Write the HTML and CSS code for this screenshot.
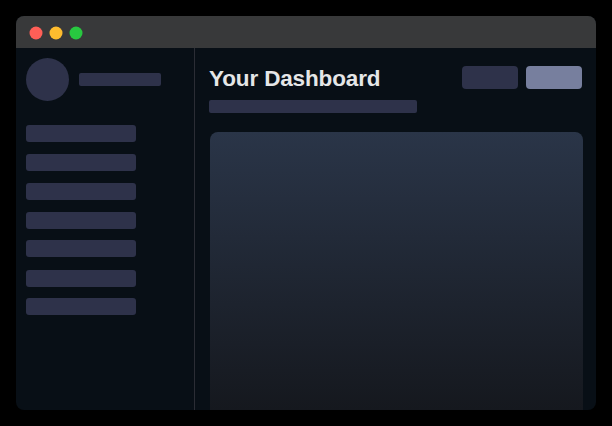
FILE: index.html
```html
<!DOCTYPE html>
<html lang="en">
<head>
<meta charset="utf-8">
<title>Your Dashboard</title>
<link rel="stylesheet" href="styles.css">
</head>
<body>
<div class="window">
  <header class="titlebar">
    <svg width="54" height="14" viewBox="0 0 54 14">
      <circle cx="7" cy="7" r="6.5" fill="#ff5f57"/>
      <circle cx="27" cy="7" r="6.5" fill="#febc2e"/>
      <circle cx="47" cy="7" r="6.5" fill="#28c840"/>
    </svg>
  </header>
  <div class="body">
    <aside class="sidebar">
      <div class="profile">
        <div class="avatar"></div>
        <div class="name"></div>
      </div>
      <nav class="menu">
        <div class="item"></div>
        <div class="item"></div>
        <div class="item"></div>
        <div class="item"></div>
        <div class="item raised"></div>
        <div class="item lowered"></div>
        <div class="item raised"></div>
      </nav>
    </aside>
    <main class="main">
      <div class="heading">
        <h1>Your Dashboard</h1>
        <div class="actions">
          <div class="button"></div>
          <div class="button primary"></div>
        </div>
      </div>
      <div class="subtitle"></div>
      <section class="panel"></section>
    </main>
  </div>
</div>
</body>
</html>
```

FILE: styles.css
```css
* { box-sizing: border-box; }
body {
  margin: 0;
  padding: 16px;
  height: 426px;
  background: #000;
  overflow: hidden;
  font-family: "Liberation Sans", Arial, sans-serif;
}
.window {
  width: 580px;
  height: 394px;
  display: flex;
  flex-direction: column;
  border-radius: 8px;
  overflow: hidden;
  background: #080f16;
}
.titlebar {
  height: 32px;
  flex: none;
  display: flex;
  align-items: center;
  padding: 2px 13px 0;
  background: #38393a;
}
.body { flex: 1; display: flex; }
.sidebar {
  width: 179px;
  border-right: 1px solid #2b2d35;
  padding: 10px 9px 0 10px;
  flex: none;
}
.profile { display: flex; align-items: center; gap: 10px; }
.avatar { width: 43px; height: 43px; border-radius: 50%; background: #2e324a; }
.name { width: 82px; height: 13px; border-radius: 2px; background: #2e324a; }
.menu { display: flex; flex-direction: column; gap: 12px; margin-top: 24px; }
.item {
  width: 110px;
  height: 17px;
  border-radius: 3px;
  background: #2e324a;
}
.raised { margin-top: -1px; }
.lowered { margin-top: 1px; }
.main {
  flex: 1;
  display: flex;
  flex-direction: column;
  padding: 18px 13px 0 14px;
}
.heading {
  height: 23px;
  display: flex;
  align-items: center;
  justify-content: space-between;
  padding-right: 1px;
}
h1 {
  margin: 0;
  padding-top: 2px;
  font-size: 22.5px;
  letter-spacing: -0.14px;
  line-height: 24px;
  font-weight: 700;
  color: #e5e6e7;
}
.actions { display: flex; gap: 8px; }
.button { width: 56px; height: 23px; border-radius: 4px; background: #2e324a; }
.primary { background: #777f9e; }
.subtitle {
  width: 208px;
  height: 13px;
  margin-top: 11px;
  border-radius: 2px;
  background: #2e324a;
}
.panel {
  flex: 1;
  margin: 19px 0 0 1px;
  border-radius: 8px 8px 0 0;
  background: linear-gradient(#2a3548, #15181e);
}
```
